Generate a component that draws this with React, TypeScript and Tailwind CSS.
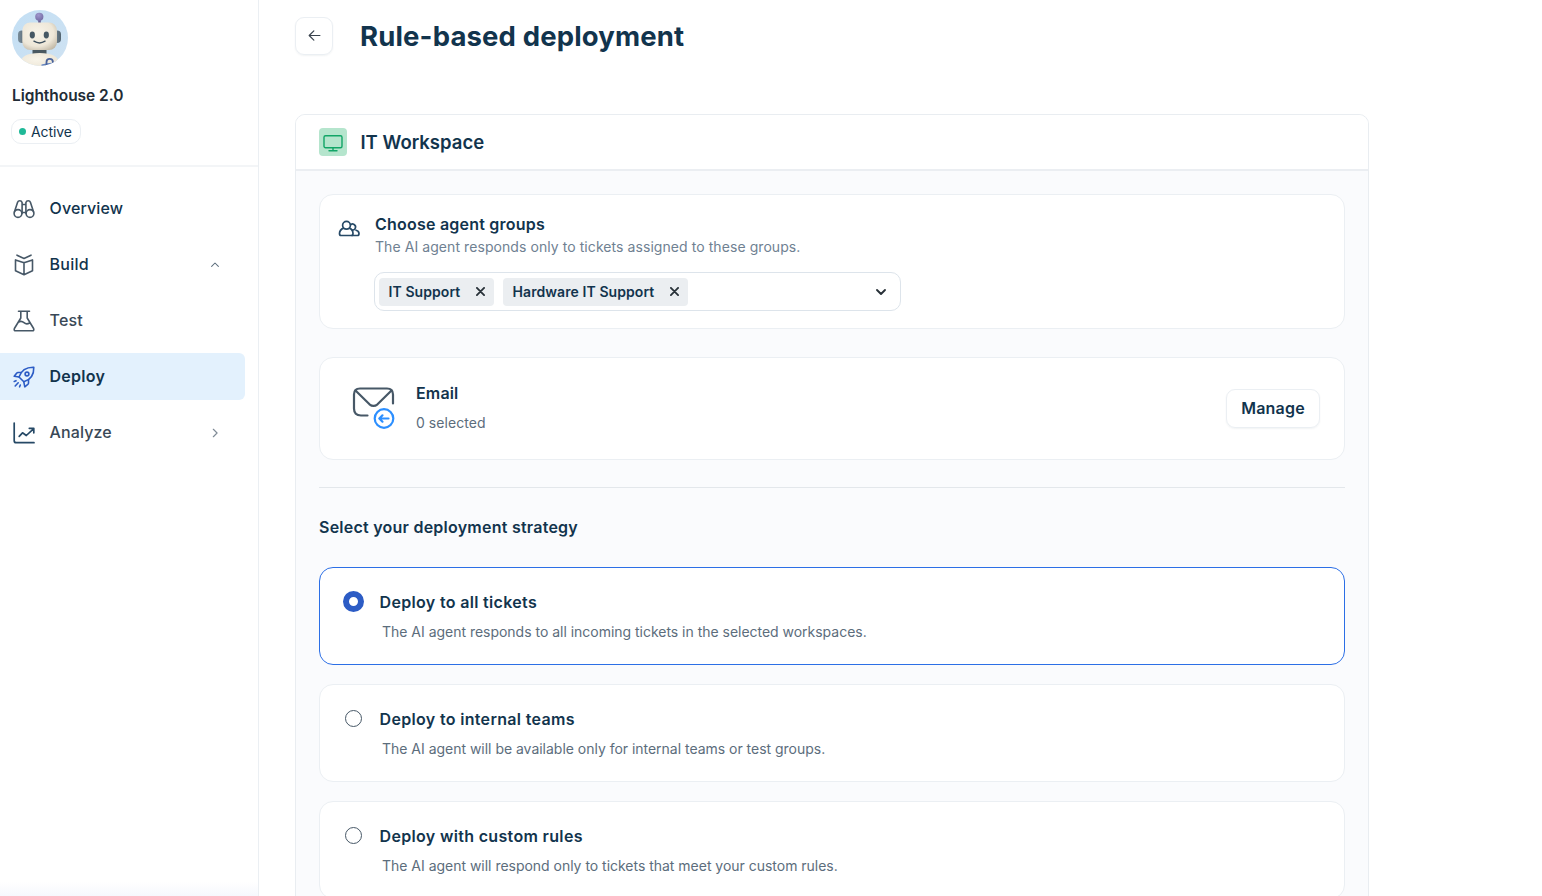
import { ReactNode } from 'react';

const icon = 'h-[22px] w-[22px] shrink-0';

function Robot() {
  return (
    <svg className="h-14 w-14" viewBox="0 0 56 56">
      <defs>
        <clipPath id="avatar"><circle cx="28" cy="28" r="28" /></clipPath>
        <linearGradient id="bg" x1="0" y1="0" x2="1" y2="1">
          <stop offset="0" stopColor="#c3dff4" /><stop offset="1" stopColor="#cfe2f2" />
        </linearGradient>
        <radialGradient id="shell" cx=".42" cy=".38" r=".8">
          <stop offset="0" stopColor="#f8f4e9" /><stop offset=".6" stopColor="#eee7d8" /><stop offset="1" stopColor="#b5ab98" />
        </radialGradient>
        <radialGradient id="ball" cx=".4" cy=".3" r=".8">
          <stop offset="0" stopColor="#a097cd" /><stop offset="1" stopColor="#6f679f" />
        </radialGradient>
        <linearGradient id="ear" x1="0" y1="0" x2="1" y2="0">
          <stop offset="0" stopColor="#7a8d9a" /><stop offset="1" stopColor="#52636f" />
        </linearGradient>
      </defs>
      <g clipPath="url(#avatar)">
        <rect width="56" height="56" fill="url(#bg)" />
        <rect x="26.2" y="8" width="2.6" height="5" fill="#665f92" />
        <circle cx="27.300" cy="6.800" r="4.100" fill="url(#ball)" />
        <rect x="6" y="20.500" width="8" height="12.500" rx="4" fill="url(#ear)" />
        <rect x="41" y="20.500" width="8" height="12.500" rx="4" fill="url(#ear)" />
        <rect x="20.500" y="38" width="14" height="6" fill="#4a5961" />
        <path d="M7 60C7 47 13 43 27.500 43S48 47 49 60Z" fill="url(#shell)" />
        <rect x="10.300" y="12.500" width="34.700" height="27.500" rx="8" fill="url(#shell)" />
        <ellipse cx="20.300" cy="25" rx="2.600" ry="3.400" fill="#465863" />
        <ellipse cx="34.300" cy="25" rx="2.600" ry="3.400" fill="#465863" />
        <path d="M22 31.200Q27.500 34.600 33 31.200" fill="none" stroke="#3f505d" strokeWidth="1.500" strokeLinecap="round" />
        <path d="M29.500 56V54.500Q35 53 42 52.500L46 50V56Z" fill="#6484c0" />
        <path d="M34.500 56V52a3.200 3.200 0 0 1 6.400 0V56" fill="none" stroke="#4a639b" strokeWidth="1.800" />
      </g>
    </svg>
  );
}

const Binoculars = () => (
  <svg className={icon} viewBox="0 0 22 22" fill="none" stroke="#475867" strokeWidth="1.600" strokeLinejoin="round" strokeLinecap="round">
    <circle cx="5" cy="15.500" r="3.900" /><circle cx="17" cy="15.500" r="3.900" />
    <path d="M1.400 14 4.600 4.200Q5.100 2.700 6.800 2.700T9.100 4.500V15.500M20.600 14 17.400 4.200Q16.900 2.700 15.200 2.700T12.900 4.500V15.500M9.100 6.500H12.900M9.100 14.500H12.900" />
  </svg>
);
const Box = () => (
  <svg className={icon} viewBox="0 0 22 22" fill="none" stroke="#475867" strokeWidth="1.600" strokeLinejoin="round" strokeLinecap="round">
    <path d="M4 1.200 11 4.400 18 1.200M11 8.500V20.500M2.500 5.900 11 8.800 19.500 5.900V16.800L11 20.700 2.500 16.800Z" />
  </svg>
);
const Flask = () => (
  <svg className={icon} viewBox="0 0 22 22" fill="none" stroke="#475867" strokeWidth="1.600" strokeLinejoin="round" strokeLinecap="round">
    <path d="M5.500 1.200H16.500M7.800 1.200V8L1.400 18.500Q.600 20.800 2.800 20.800H19.200Q21.400 20.800 20.600 18.500L14.200 8V1.200M5.700 12Q8.500 10.500 11 12.700T16.500 13" />
  </svg>
);
const Rocket = () => (
  <svg className={icon} viewBox="0 0 22 22" fill="none" stroke="#2c5cc5" strokeWidth="1.600" strokeLinejoin="round" strokeLinecap="round">
    <path d="M6 11C8 5 13 1 20.800 1.200 21 9 17 14 10.800 15.800Z" />
    <circle cx="14" cy="8" r="1.900" />
    <path d="M8 6.500H5Q4.200 6.500 3.600 7.200L1.200 10.300 6 11M15.500 13.800V17Q15.500 17.800 14.800 18.400L11.800 20.800 10.800 15.800M3 14.700 1.200 15.500M5.200 16.800 2.200 20M7.300 19 6.600 20.800" />
  </svg>
);
const Chart = () => (
  <svg className={icon} viewBox="0 0 22 22" fill="none" stroke="#264966" strokeWidth="1.700" strokeLinejoin="round" strokeLinecap="round">
    <path d="M1.200 1V18.700Q1.200 20.700 3.200 20.700H21M6.200 14.300 9.500 10.800 13.300 13.500 20.500 6.800M16.300 6.300H20.800V10.800" />
  </svg>
);

const Arrow = ({ d, cls, stroke, w }: { d: string; cls: string; stroke: string; w: number }) => (
  <svg className={cls} viewBox="0 0 12 12" fill="none" stroke={stroke} strokeWidth={w} strokeLinecap="round" strokeLinejoin="round"><path d={d} /></svg>
);

function NavItem({ glyph, label, tone, active, end }: { glyph: ReactNode; label: string; tone: string; active?: boolean; end?: ReactNode }) {
  return (
    <a className={`flex h-[47px] w-[245px] items-center rounded-r-md pl-[12.500px] pr-[25px] ${active ? 'bg-[#e3f1fd]' : ''}`}>
      {glyph}
      <span className={`ml-[15px] flex-1 pb-px text-[16px] leading-6 ${tone}`}>{label}</span>
      {end}
    </a>
  );
}

function Chip({ label, cls }: { label: string; cls: string }) {
  return (
    <span className={`flex h-7 items-center justify-between rounded bg-[#ebeef1] pl-[9.500px] pr-[9.500px] text-[14px] font-semibold tracking-[0.08px] text-[#12344d] ${cls}`}>
      <span className="pb-px">{label}</span>
      <Arrow cls="h-[9px] w-[9px]" d="M1.200 1.200 10.800 10.800M10.800 1.200 1.200 10.800" stroke="#283138" w={2.400} />
    </span>
  );
}

function Option({ title, desc, checked }: { title: string; desc: string; checked?: boolean }) {
  return (
    <div className={`h-[98px] shrink-0 rounded-[14px] border bg-white pl-[23px] pt-[22px] ${checked ? 'border-[#2c6fe6]' : 'border-[#ebeff3]'}`}>
      <div className="flex h-6 items-center">
        <span className="flex w-[21px] justify-center pb-px">
          {checked ? <span className="h-[21px] w-[21px] rounded-full border-[6px] border-[#2c5cc5] bg-white" /> : <span className="h-[17px] w-[17px] rounded-full border border-[#475867]" />}
        </span>
        <span className="ml-[15.500px] text-[16px] font-semibold tracking-[0.33px] text-[#12344d]">{title}</span>
      </div>
      <p className="ml-[39px] mt-[8px] text-[14px] leading-5 tracking-[-0.02px] text-[#5c6d7c]">{desc}</p>
    </div>
  );
}

export default function App() {
  return (
    <div className="flex h-[896px] w-full overflow-hidden bg-white font-['Inter',sans-serif] text-[#12344d]">
      <aside className="flex w-[259px] shrink-0 flex-col border-r border-[#ebeff3]">
        <header className="flex h-[167px] shrink-0 flex-col items-start border-b-2 border-[#f3f5f7] pl-3 pt-[10px]">
          <Robot />
          <h2 className="mt-[18px] text-[15.500px] font-semibold leading-6 tracking-[-0.040px] text-[#222c36]">Lighthouse 2.0</h2>
          <span className="-ml-px mt-[11px] flex h-[25px] w-[70px] items-center rounded-[10px] border border-[#ebeff3] pb-px pl-[7px] text-[14px] tracking-[-0.100px]">
            <i className="mr-[5px] h-[7px] w-[7px] rounded-full bg-[#1fb998]" />Active
          </span>
        </header>
        <nav className="flex flex-col gap-[9px] pt-[18px]">
          <NavItem glyph={<Binoculars />} label="Overview" tone="font-medium tracking-[0.13px] text-[#12344d]" />
          <NavItem glyph={<Box />} label="Build" tone="font-medium tracking-[0.25px] text-[#12344d]" end={<Arrow cls="h-[9px] w-[10px]" d="M1.500 8.500 6 4 10.500 8.500" stroke="#5c6d7c" w={1.400} />} />
          <NavItem glyph={<Flask />} label="Test" tone="font-medium tracking-[0.2px] text-[#394856]" />
          <NavItem glyph={<Rocket />} label="Deploy" tone="font-semibold tracking-[0.25px] text-[#12344d]" active />
          <NavItem glyph={<Chart />} label="Analyze" tone="font-medium tracking-[0.13px] text-[#394856]" end={<Arrow cls="h-[10px] w-[10px]" d="M4 1.500 8.500 6 4 10.500" stroke="#7f8b96" w={1.400} />} />
        </nav>
        <div className="mt-auto h-[14px] shrink-0 bg-linear-to-b from-white to-[#f6f8fd]" />
      </aside>

      <main className="flex flex-1 flex-col pl-9 pt-[17px]">
        <div className="flex h-[38px] shrink-0 items-center">
          <button className="flex h-[38px] w-[38px] items-center justify-center rounded-[9px] border border-[#ebeff3] pb-px shadow-[0_1px_2px_rgba(24,50,71,0.06)]">
            <Arrow cls="h-[13px] w-[13px]" d="M11 6H1.300M5.400 1.700 1.100 6 5.400 10.300" stroke="#39434d" w={1.100} />
          </button>
          <h1 className="ml-[27px] pt-[2px] text-[27.500px] font-bold tracking-[0.150px]">Rule-based deployment</h1>
        </div>

        <section className="mt-[59px] flex h-[850px] w-[1074px] shrink-0 flex-col rounded-t-[10px] border border-[#e9edf1] bg-[#fafbfd]">
          <div className="flex h-[56px] shrink-0 items-center rounded-t-[9px] border-b-2 border-[#ebeef2] bg-white pl-[23px]">
            <span className="flex h-7 w-7 items-center justify-center rounded bg-[#b5e5cd]">
              <svg className="h-5 w-5" viewBox="0 0 20 20" fill="none" stroke="#12a567" strokeWidth="1.400" strokeLinecap="round" strokeLinejoin="round">
                <rect x="1" y="3.700" width="18" height="12" rx="1.500" /><path d="M10 16V18.500M6 18.700H14" />
              </svg>
            </span>
            <h2 className="ml-[13.500px] pt-[2px] text-[18.500px] font-semibold">IT Workspace</h2>
          </div>

          <div className="flex flex-col px-[23px] pt-[23px]">
            <div className="flex h-[135px] shrink-0 rounded-[14px] border border-[#ebeff3] bg-white pl-[18px] pt-[17px]">
              <svg className="mt-[6px] h-[22px] w-[22px]" viewBox="0 0 22 22" fill="none" stroke="#264966" strokeWidth="1.700" strokeLinejoin="round">
                <circle cx="8.500" cy="7.300" r="3.900" />
                <path d="M5.600 10.100C3 11.200 1.500 13 1.500 15.500Q1.500 17.500 3 17.500H13.500Q15 17.500 15 15.500C15 13 14 11.200 11.400 10.100" />
                <path d="M12.200 7.200A3 3 0 1 1 13.800 12M17.400 12Q21 12.800 21 15.500 21 17.500 19.500 17.500H13.500" />
              </svg>
              <div className="ml-[15px]">
                <h3 className="text-[16px] font-semibold leading-6 tracking-[0.220px]">Choose agent groups</h3>
                <p className="text-[14px] leading-[22px] tracking-[0.070px] text-[#6f8192]">The AI agent responds only to tickets assigned to these groups.</p>
                <div className="-ml-px mt-[14px] flex h-[39px] w-[527px] items-center rounded-[10px] border border-[#dde4eb] pl-[4px] pr-[13px]">
                  <Chip label="IT Support" cls="w-[115px]" />
                  <Chip label="Hardware IT Support" cls="ml-[9px] w-[185px]" />
                  <Arrow cls="ml-auto h-3 w-3" d="M2 4 6 8 10 4" stroke="#283138" w={1.900} />
                </div>
              </div>
            </div>

            <div className="mt-[28px] flex h-[103px] shrink-0 items-center rounded-[14px] border border-[#ebeff3] bg-white pb-[2px] pl-[32px] pr-[24px]">
              <svg className="h-[44px] w-[44px]" viewBox="0 0 44 44" fill="none" stroke="#475867" strokeWidth="2.200" strokeLinecap="round" strokeLinejoin="round">
                <path d="M15.500 29.500H9Q2 29.500 2 22.500V8.500Q2 2.500 8 2.500H35Q41 2.500 41 8.500V17.500M3.500 4.500 17.500 18.300Q21.500 21.500 25.500 18.300L39.500 4.500" />
                <g stroke="#2c8fff"><circle cx="32" cy="32.500" r="9.300" /><path d="M36.500 32.500H27.500M30.500 29.300 27.300 32.500 30.500 35.700" /></g>
              </svg>
              <div className="ml-[20px]">
                <h3 className="text-[16px] font-semibold leading-6 tracking-[0.150px]">Email</h3>
                <p className="mt-[7px] text-[14px] leading-[22px] tracking-[0.050px] text-[#5c6d7c]">0 selected</p>
              </div>
              <button className="ml-auto mt-px h-[39px] w-[94px] rounded-[9px] border border-[#ebeff3] pb-px text-[16px] font-semibold tracking-[0.200px] shadow-[0_1px_2px_rgba(24,50,71,0.06)]">Manage</button>
            </div>

            <hr className="mt-[27px] border-[#e3e7eb]" />
            <h3 className="mt-[27px] text-[16px] font-semibold leading-6 tracking-[0.240px]">Select your deployment strategy</h3>
            <div className="mt-[28px] flex flex-col gap-[19px]">
              <Option checked title="Deploy to all tickets" desc="The AI agent responds to all incoming tickets in the selected workspaces." />
              <Option title="Deploy to internal teams" desc="The AI agent will be available only for internal teams or test groups." />
              <Option title="Deploy with custom rules" desc="The AI agent will respond only to tickets that meet your custom rules." />
            </div>
          </div>
        </section>
      </main>
    </div>
  );
}
